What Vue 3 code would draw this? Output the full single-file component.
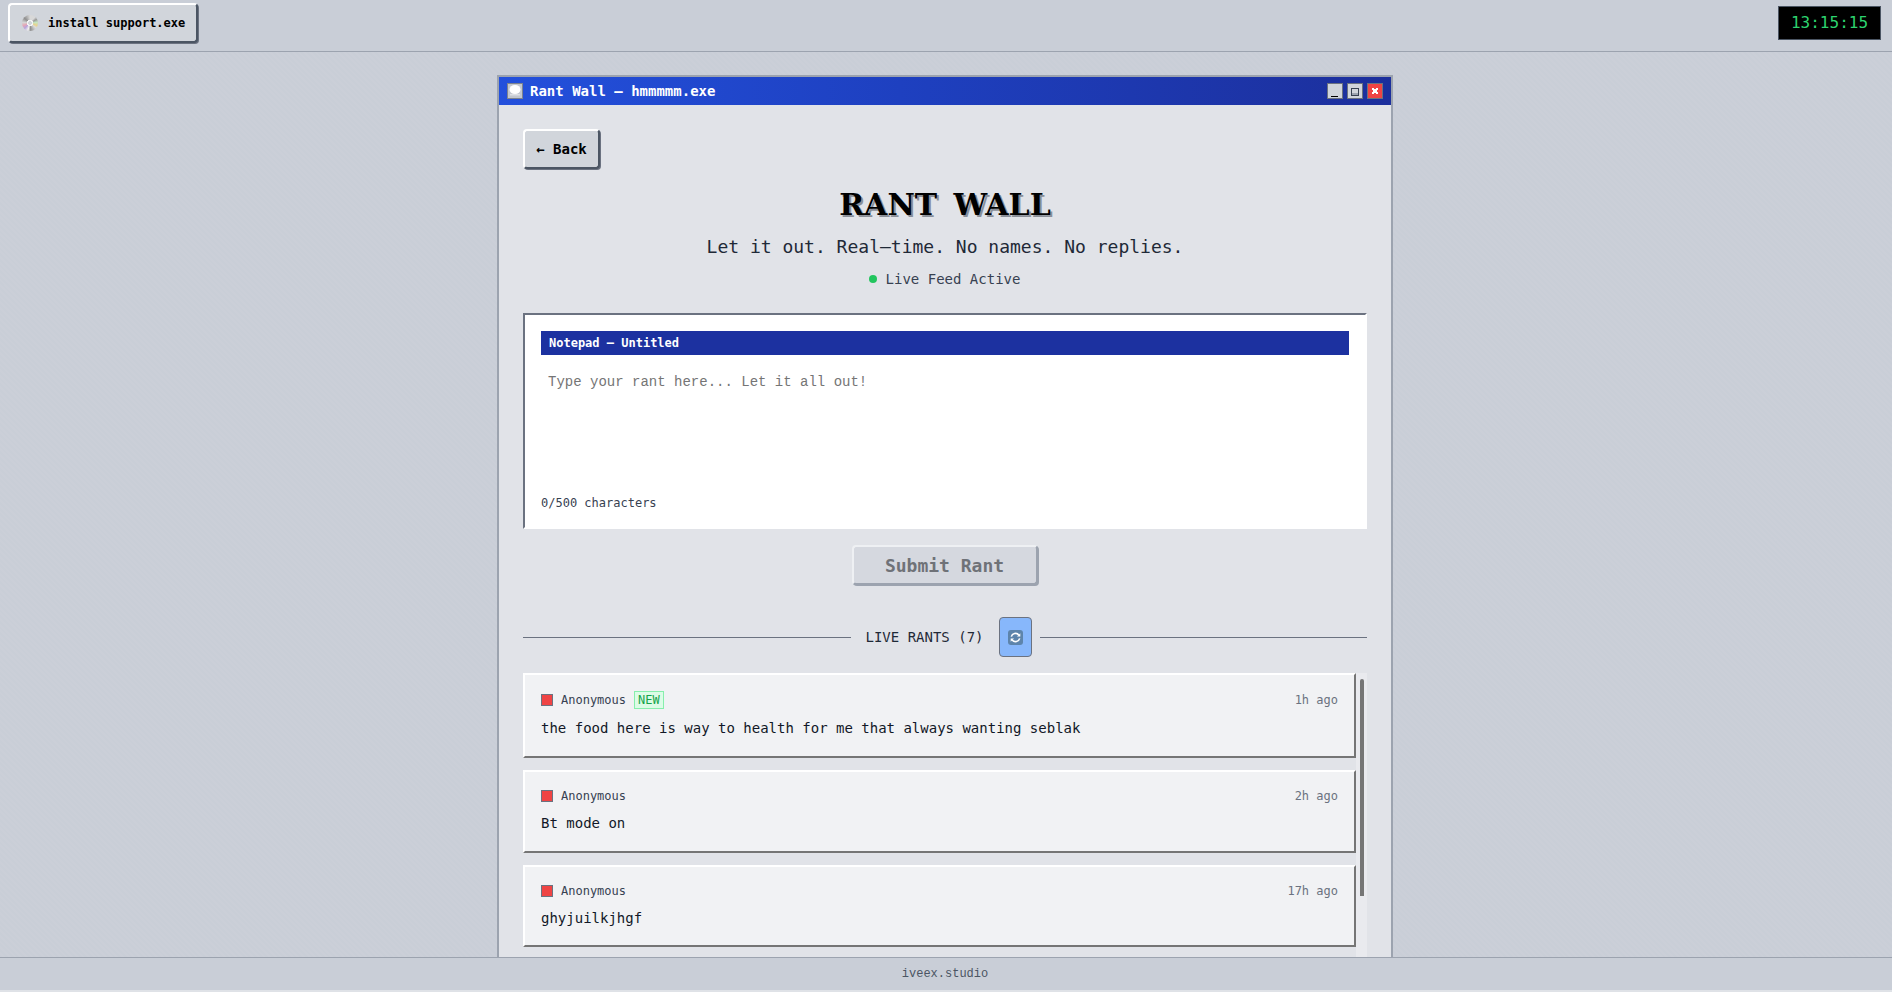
<script setup>
const rants = [
  { text: 'the food here is way to health for me that always wanting seblak', time: '1h ago', isNew: true },
  { text: 'Bt mode on', time: '2h ago' },
  { text: 'ghyjuilkjhgf', time: '17h ago' }
]
</script>

<template>
  <div class="desktop">
    <header class="topbar">
      <button class="btn install"><span class="disc"></span>install support.exe</button>
      <div class="clock">13:15:15</div>
    </header>
    <main class="stage">
      <section class="window">
        <div class="titlebar">
          <div class="title">
            <svg class="ticon" viewBox="0 0 16 16" width="16" height="16">
              <rect x="0.5" y="0.5" width="15" height="15" fill="#c3c7cf" stroke="#7d838e" />
              <ellipse cx="8" cy="6.5" rx="5.5" ry="4.5" fill="#fff" />
              <path d="M3 11h10v1.5H3z" fill="#dfe1e5" />
            </svg>
            Rant Wall — hmmmmm.exe
          </div>
          <div class="controls">
            <span class="ctl"><i class="min"></i></span>
            <span class="ctl"><i class="max"></i></span>
            <span class="ctl close">
              <svg viewBox="0 0 8 8" width="8" height="8" shape-rendering="crispEdges">
                <path d="M1 1h2v1h2V1h2v2H6v2h1v2H5V6H3v1H1V5h1V3H1z" fill="#fff" />
              </svg>
            </span>
          </div>
        </div>
        <div class="content">
          <button class="btn back">← Back</button>
          <h1>RANT WALL</h1>
          <p class="sub">Let it out. Real–time. No names. No replies.</p>
          <p class="live"><span class="dot"></span>Live Feed Active</p>
          <div class="composer">
            <div class="npbar">Notepad – Untitled</div>
            <textarea class="area" placeholder="Type your rant here... Let it all out!"></textarea>
            <div class="count">0/500 characters</div>
          </div>
          <div class="submit-row"><button class="submit">Submit Rant</button></div>
          <div class="divider">
            <span class="line"></span>
            <span class="dlabel">LIVE RANTS (7)</span>
            <button class="refresh">
              <svg viewBox="0 0 15 15" width="15" height="15">
                <rect width="15" height="15" rx="3" fill="#5d84ab" />
                <path d="M3.3 6.6A4.3 4.3 0 0 1 10.8 5" fill="none" stroke="#fff" stroke-width="1.6" />
                <path d="M11.7 8.4A4.3 4.3 0 0 1 4.2 10" fill="none" stroke="#fff" stroke-width="1.6" />
                <path d="M12.3 3.2v3.3H9z" fill="#fff" />
                <path d="M2.7 11.8V8.5H6z" fill="#fff" />
              </svg>
            </button>
            <span class="line"></span>
          </div>
          <div class="feed">
            <div class="list">
              <article v-for="r in rants" :key="r.text" class="rant">
                <div class="rhead">
                  <span class="who"><span class="sq"></span>Anonymous<span v-if="r.isNew" class="new">NEW</span></span>
                  <span class="time">{{ r.time }}</span>
                </div>
                <p class="rtext">{{ r.text }}</p>
              </article>
            </div>
            <div class="track"><div class="thumb"></div></div>
          </div>
        </div>
      </section>
    </main>
    <footer class="foot">iveex.studio</footer>
  </div>
</template>

<style>
html, body { margin: 0; height: 100%; overflow: hidden; }
</style>

<style scoped>
.desktop {
  height: 992px;
  display: flex;
  flex-direction: column;
  overflow: hidden;
  background: #c9ced7;
  font-family: "DejaVu Sans Mono", monospace;
  color: #000;
}
.topbar {
  flex: none;
  height: 52px;
  box-sizing: border-box;
  border-bottom: 1px solid #9ca3af;
  display: flex;
  justify-content: space-between;
  align-items: flex-start;
  padding: 3px 11px 0 8px;
}
.btn {
  font-family: inherit;
  font-weight: 700;
  background: #d1d5db;
  border: 2px solid;
  border-color: #fff #4b5563 #4b5563 #fff;
  border-radius: 4px;
  box-shadow: 1px 1px 0 #6b7280;
  color: #000;
  padding: 0;
}
.install {
  width: 190px;
  height: 40px;
  font-size: 12px;
  display: flex;
  align-items: center;
  padding-left: 12px;
}
.disc {
  width: 16px;
  height: 16px;
  border-radius: 50%;
  margin-right: 10px;
  background:
    radial-gradient(circle, #d1d5db 0 2px, #f4f4f4 2px 3px, transparent 3px),
    conic-gradient(#d8d8d8 0 40deg, #9a9a9a 60deg, #c7e6c0 85deg, #e8d28c 110deg, #dcdcdc 130deg, #8f8f8f 175deg, #f2f2f2 195deg, #b9a5dc 225deg, #e6a7b5 250deg, #d6d6d6 275deg, #8e8e8e 310deg, #d8d8d8);
}
.clock {
  margin-top: 3px;
  width: 103px;
  height: 34px;
  box-sizing: border-box;
  border: 1px solid #4b5563;
  background: #000;
  color: #2dd36f;
  font-size: 16px;
  line-height: 32px;
  text-align: center;
}
.stage {
  flex: 1;
  min-height: 0;
  overflow: hidden;
  display: flex;
  justify-content: center;
  padding: 23px 2px 0 0;
  background: repeating-linear-gradient(45deg, #c9ced7 0 2px, #cbcfd8 2px 4px);
}
.window {
  width: 896px;
  height: 1200px;
  flex: none;
  box-sizing: border-box;
  border: 2px solid #9ca3af;
  background: #e1e3e8;
}
.titlebar {
  height: 28px;
  display: flex;
  align-items: center;
  justify-content: space-between;
  background: linear-gradient(90deg, #2350dc, #1e40c0 45%, #1c2f9c);
  padding: 0 8px;
  color: #fff;
}
.title { display: flex; align-items: center; font-size: 14px; font-weight: 700; }
.ticon { display: block; margin-right: 7px; flex: none; }
.controls { display: flex; gap: 4px; }
.ctl {
  width: 16px;
  height: 16px;
  box-sizing: border-box;
  border: 1px solid #6b7280;
  background: #d1d5db;
  position: relative;
  display: block;
}
.min { position: absolute; left: 3px; bottom: 1px; width: 7px; height: 1px; background: #000; }
.max { position: absolute; left: 3px; top: 4px; width: 8px; height: 8px; border: 1px solid #374151; background: linear-gradient(#d1d5db 60%, #9ca3af 60%); box-sizing: border-box; }
.close { background: #ef4444; display: flex; align-items: center; justify-content: center; }
.close svg { display: block; }
.content { padding: 24px; display: flex; flex-direction: column; }
.back { align-self: flex-start; width: 77px; height: 40px; font-size: 14px; }
h1 {
  margin: 16px 0 0;
  text-align: center;
  font-family: "DejaVu Serif", serif;
  font-size: 30px;
  line-height: 40px;
  word-spacing: 6px;
  font-weight: 700;
  text-shadow: 2px 2px 0 #8a8f98;
}
.sub { margin: 8px 0 0; text-align: center; font-size: 18px; line-height: 28px; color: #1f2937; }
.live { margin: 8px 0 0; padding-right: 1px; text-align: center; font-size: 14px; line-height: 20px; color: #374151; display: flex; justify-content: center; align-items: center; }
.dot { width: 8px; height: 8px; border-radius: 50%; background: #22c55e; margin-right: 9px; }
.composer {
  margin-top: 24px;
  height: 216px;
  box-sizing: border-box;
  background: #fff;
  border: 2px solid #fff;
  border-top-color: #6b7280;
  border-left-color: #6b7280;
  padding: 16px 16px 16px;
  display: flex;
  flex-direction: column;
}
.npbar { height: 24px; line-height: 24px; background: #1c31a0; color: #fff; font-size: 12px; font-weight: 700; padding: 0 8px; flex: none; }
.area {
  flex: 1;
  border: 0;
  outline: 0;
  resize: none;
  padding: 19px 7px 0;
  font-family: "Liberation Mono", monospace;
  font-size: 14px;
}
.area::placeholder { color: #757575; }
.count { font-size: 12px; line-height: 16px; color: #374151; }
.submit-row { display: flex; justify-content: center; margin-top: 16px; padding-right: 1px; }
.submit {
  width: 186px;
  height: 40px;
  box-sizing: border-box;
  font-family: inherit;
  font-weight: 700;
  font-size: 18px;
  background: #d5d8df;
  border: 2px solid;
  border-color: #eef0f3 #9ca3af #9ca3af #eef0f3;
  border-radius: 4px;
  box-shadow: 1px 1px 0 #9ca3af;
  color: #6f7278;
}
.divider { display: flex; align-items: center; margin-top: 32px; }
.line { flex: 1; height: 1px; background: #6b7280; }
.dlabel { margin: 0 15px; font-size: 14px; color: #1f2937; }
.refresh {
  width: 33px;
  height: 40px;
  margin-right: 8px;
  padding: 0;
  border: 1px solid #6b7280;
  border-radius: 4px;
  background: #87b7fb;
  display: flex;
  align-items: center;
  justify-content: center;
}
.refresh svg { display: block; }
.feed { margin-top: 16px; display: flex; min-height: 300px; }
.list { flex: 1; display: flex; flex-direction: column; gap: 12px; }
.rant {
  box-sizing: border-box;
  background: #f1f2f4;
  border: 2px solid;
  border-color: #fff #757575 #757575 #fff;
  padding: 16px;
}
.rhead { display: flex; justify-content: space-between; align-items: center; font-size: 12px; line-height: 16px; }
.who { display: flex; align-items: center; color: #374151; }
.sq { width: 12px; height: 12px; box-sizing: border-box; background: #ef4444; border: 1px solid #6b7280; margin-right: 8px; }
.new { margin-left: 8px; padding: 0 3px; background: #dcfce7; border: 1px solid #86efac; color: #16a34a; line-height: 16px; }
.time { color: #6b7280; }
.rtext { margin: 8px 0 0; font-size: 14px; line-height: 22.75px; color: #111827; }
.track { width: 11px; flex: none; background: #e9eaee; padding: 6px 3px 0 4px; box-sizing: border-box; }
.thumb { width: 4px; height: 217px; background: #757575; border-radius: 2px 2px 0 0; }
.foot {
  flex: none;
  height: 35px;
  box-sizing: border-box;
  border-top: 1px solid #9ca3af;
  border-bottom: 2px solid #dfe2e7;
  background: #c9ced7;
  text-align: center;
  padding-right: 2px;
  font-family: "Liberation Mono", monospace;
  font-size: 12px;
  line-height: 32px;
  color: #4b5563;
}
</style>
